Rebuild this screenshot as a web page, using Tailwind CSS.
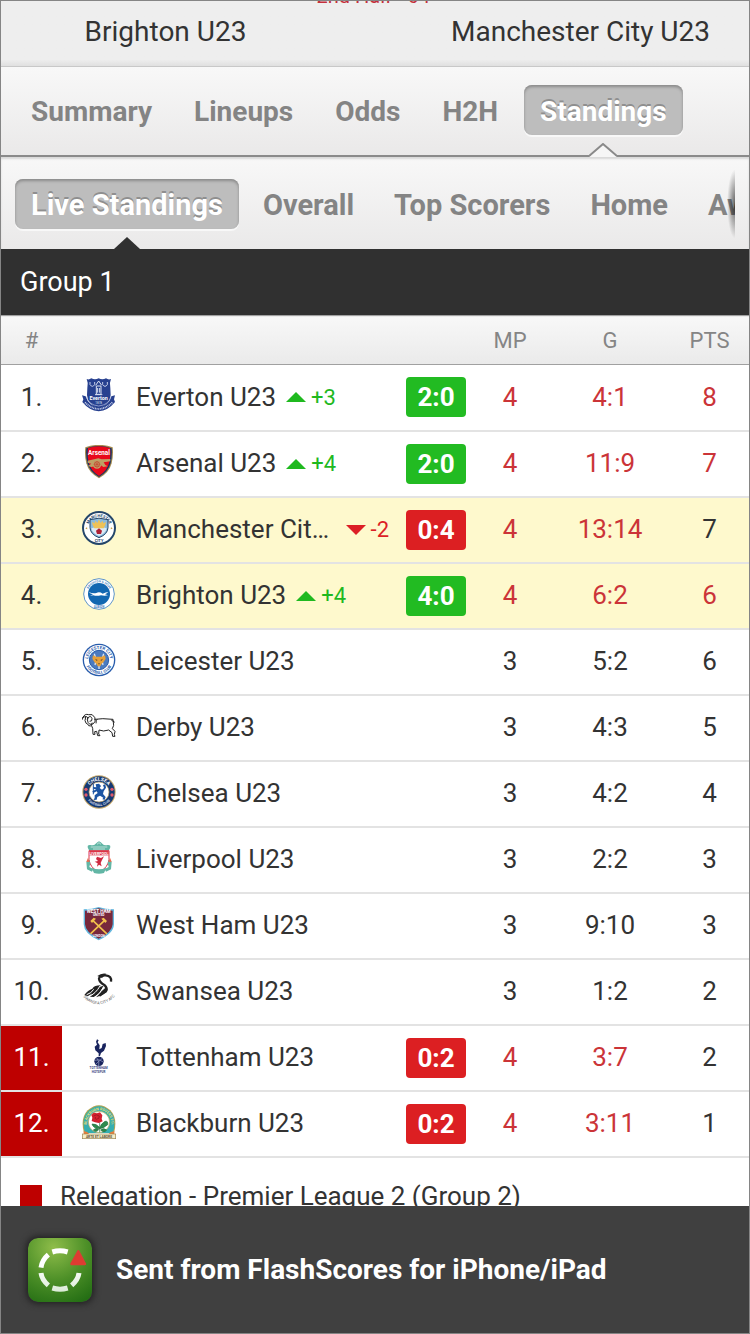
<!DOCTYPE html>
<html lang="en">
<head>
  <meta charset="UTF-8">
  <meta name="viewport" content="width=device-width, initial-scale=1">
  <title>Brighton U23 - Manchester City U23 | Standings</title>
  <script src="https://cdn.jsdelivr.net/npm/@tailwindcss/browser@4"></script>
</head>
<body class="flex flex-col h-screen overflow-hidden border border-[#858585] bg-white font-['Roboto',sans-serif] text-[#333]">

  <!-- Match header -->
  <header class="flex flex-col justify-end shrink-0 h-[66px] overflow-hidden border-b border-[#c8c8c8] bg-linear-to-b from-[#eeeeee] from-90% to-[#e0e0e0] text-center">
    <p class="mb-1.5 text-xl leading-6 text-[#c4303c]">2nd Half - 64'</p>
    <div class="flex pb-4 pr-1 text-[28px] leading-9">
      <h1 class="flex-1">Brighton U23</h1>
      <span class="w-[86px]"></span>
      <h1 class="flex-1">Manchester City U23</h1>
    </div>
  </header>

  <!-- Main tabs -->
  <nav class="flex gap-2.5 shrink-0 h-[90px] pl-3.5 border-b-2 border-[#8a8a8a] bg-linear-to-b from-[#f8f8f8] to-[#eae9e9] text-[28px] font-bold text-[#848484] [text-shadow:0_2px_0_#fff]">
    <button class="h-[50px] mt-[18px] pt-1 px-4">Summary</button>
    <button class="h-[50px] mt-[18px] pt-1 px-4">Lineups</button>
    <button class="h-[50px] mt-[18px] pt-1 px-4">Odds</button>
    <button class="h-[50px] mt-[18px] pt-1 px-4">H2H</button>
    <div class="relative pt-[18px]">
      <button class="h-[50px] pt-1 px-4 rounded-lg bg-[#bdbdbd] text-white shadow-[inset_0_2px_3px_#8a8a8a,0_2px_0_#f8f8f8] [text-shadow:0_-2px_0_#8f8f8f]">Standings</button>
      <svg class="absolute -bottom-0.5 left-1/2 -translate-x-1/2 w-7 h-3.5" viewBox="0 0 28 14">
        <path d="M0 14 L14 1 L28 14Z" fill="#f6f6f6"/>
        <path d="M0 13 L14 1 L28 13" fill="none" stroke="#8a8a8a" stroke-width="2"/>
      </svg>
    </div>
  </nav>

  <!-- Sub tabs -->
  <div class="shrink-0 h-[92px] pr-3.5 bg-linear-to-b from-[#f8f8f8] to-[#eae9e9] shadow-[inset_0_2px_2px_#d8d8d8]">
    <nav class="relative flex gap-2 h-full pl-3.5 overflow-hidden whitespace-nowrap text-[29px] font-bold text-[#848484] [text-shadow:0_2px_0_#fff]">
      <div class="relative pt-[22px]">
        <button class="h-[50px] pt-1 px-4 rounded-lg bg-[#bdbdbd] text-white shadow-[inset_0_2px_3px_#8a8a8a,0_2px_0_#f8f8f8] [text-shadow:0_-2px_0_#8f8f8f]">Live Standings</button>
        <svg class="absolute bottom-0 left-1/2 -translate-x-1/2 w-[26px] h-3" viewBox="0 0 26 12">
          <path d="M0 12 L13 0 L26 12Z" fill="#303030"/>
        </svg>
      </div>
      <button class="h-[50px] mt-[22px] pt-1 px-4">Overall</button>
      <button class="h-[50px] mt-[22px] pt-1 px-4">Top Scorers</button>
      <button class="h-[50px] mt-[22px] pt-1 px-4">Home</button>
      <button class="h-[50px] mt-[22px] pt-1 px-4">Away</button>
      <span class="absolute right-0 top-3 w-2 h-[70px] bg-[radial-gradient(ellipse_at_right,rgba(0,0,0,.6),transparent_70%)]"></span>
    </nav>
  </div>

  <!-- Standings -->
  <main class="flex-1 min-h-0 overflow-hidden">
    <h2 class="h-[66px] pl-[19px] bg-[#303030] text-[27px] leading-[66px] text-white">Group 1</h2>
    <table class="w-full table-fixed text-[26px] text-center">
      <colgroup>
        <col class="w-[61px]">
        <col class="w-[74px]">
        <col>
        <col class="w-16">
        <col class="w-20">
        <col class="w-[120px]">
        <col class="w-[79px]">
      </colgroup>
      <thead class="border-y border-[#a0a0a0] bg-linear-to-b from-[#f8f8f8] to-[#eaeaea] text-[22px] text-[#858585]">
        <tr class="h-[49px]">
          <th class="font-normal">#</th>
          <th></th>
          <th></th>
          <th></th>
          <th class="font-normal">MP</th>
          <th class="font-normal">G</th>
          <th class="font-normal">PTS</th>
        </tr>
      </thead>
      <tbody id="rows"></tbody>
    </table>
    <p class="flex items-center gap-[18px] pt-[22px] pl-[19px] text-[26px] leading-8 whitespace-nowrap">
      <span class="size-[22px] bg-[#be0000]"></span>Relegation - Premier League 2 (Group 2)
    </p>
  </main>

  <!-- Banner -->
  <footer class="flex items-center gap-6 shrink-0 h-[127px] pl-[27px] bg-[#404040] text-[28px] font-bold text-white">
    <svg class="size-16 rounded-[10px] shadow-[0_0_6px_2px_#222]" viewBox="0 0 192 192">
      <defs>
        <radialGradient id="app" cx=".4" cy=".15" r=".95">
          <stop offset="0" stop-color="#8fbd4a"/>
          <stop offset=".55" stop-color="#4c8f27"/>
          <stop offset="1" stop-color="#246e14"/>
        </radialGradient>
        <linearGradient id="ring" x1="0" y1="30" x2="0" y2="165" gradientUnits="userSpaceOnUse">
          <stop offset=".4" stop-color="#fff"/>
          <stop offset="1" stop-color="#d9ead5"/>
        </linearGradient>
      </defs>
      <rect width="192" height="192" rx="30" fill="url(#app)"/>
      <g fill="none" stroke="url(#ring)" stroke-width="15">
        <path d="M73 42 Q96 35 119 42"/>
        <path d="M61 50 Q42 66 39 89"/>
        <path d="M39 105 Q42 126 61 142"/>
        <path d="M73 150 Q96 157 119 150"/>
        <path d="M131 142 Q150 126 153 105"/>
      </g>
      <path d="M151 40 L171 78 H130Z" fill="#dd3c32" stroke="#dd3c32" stroke-width="7" stroke-linejoin="round"/>
    </svg>
    Sent from FlashScores for iPhone/iPad
  </footer>

  <!-- Club crests -->
  <svg class="hidden">
    <symbol id="everton" viewBox="0 0 102 102">
      <path d="M14 3 Q21 6 28 1 Q39 7 50 1 Q61 7 72 1 Q79 6 87 3 Q81 16 85 30 L86 52 Q84 80 50 92 Q17 80 15 52 L16 30 Q20 16 14 3Z" fill="#27408f"/>
      <path d="M0 52 L11 55 Q20 84 50 88 Q80 84 88 55 L99 52 L96 64 L99 72 Q78 98 50 100 Q22 98 1 72 L4 64Z" fill="#27408f"/>
      <path d="M13 56 Q20 81 50 84 Q80 81 87 56" fill="none" stroke="#b8c3e6" stroke-width="2"/>
      <path d="M9 73 Q28 92 50 93 Q72 92 91 73" fill="none" stroke="#c5cee9" stroke-width="5" stroke-dasharray="3 2"/>
      <path d="M24 12 V20 Q31 30 38 20 V12 M62 12 V20 Q69 30 76 20 V12" fill="none" stroke="#c5cee9" stroke-width="3"/>
      <path d="M41 22 L50 9 L59 22 M43 24 H57 V49 H43Z M47 30 V44 M53 30 V44 M39 50 H61" fill="none" stroke="#dbe1f2" stroke-width="3"/>
      <text x="50" y="66" text-anchor="middle" font-size="16" font-weight="700" fill="#fff">Everton</text>
      <text x="50" y="78" text-anchor="middle" font-size="9" fill="#dbe1f2">1878</text>
    </symbol>
    <symbol id="arsenal" viewBox="0 0 102 102">
      <path d="M10 7 Q50 -8 92 7 Q95 30 89 55 Q82 83 51 100 Q20 83 13 55 Q7 30 10 7Z" fill="#a58a4e"/>
      <path d="M13 10 Q50 -4 89 10 Q91 32 86 54 Q79 80 51 96 Q23 80 16 54 Q11 32 13 10Z" fill="#163365"/>
      <path d="M18 9 Q50 -2 84 9 Q87 32 82 52 Q76 78 51 93 Q26 78 20 52 Q15 32 18 9Z" fill="#e8091b"/>
      <text x="51" y="30" text-anchor="middle" font-size="19" font-weight="700" fill="#fff">Arsenal</text>
      <path d="M17 47 L49 40 L59 43 L85 42 V49 L65 52 L70 60 L77 64 L64 66 L56 60 L28 66 L18 63 L28 56 L17 53Z" fill="#bea065"/>
      <circle cx="45" cy="58" r="13" fill="#bea065"/>
      <circle cx="45" cy="58" r="8" fill="none" stroke="#c73a2a" stroke-width="2"/>
      <path d="M45 48 V68 M35 58 H55 M38 51 L52 65 M52 51 L38 65" stroke="#c73a2a" stroke-width="1.5"/>
    </symbol>
    <symbol id="mancity" viewBox="0 0 102 102">
      <circle cx="51" cy="51" r="51" fill="#24466a"/>
      <circle cx="51" cy="51" r="45" fill="#fff"/>
      <path id="mc-top" d="M18 51 A33 33 0 0 1 84 51" fill="none"/>
      <text font-size="12" font-weight="700" fill="#24466a" text-anchor="middle"><textPath href="#mc-top" startOffset="50%">MANCHESTER</textPath></text>
      <text x="51" y="92" text-anchor="middle" font-size="12" font-weight="700" fill="#24466a">CITY</text>
      <path d="M24 26 Q51 17 78 26 V50 Q77 70 51 80 Q25 70 24 50Z" fill="#8dbbdd" stroke="#24466a" stroke-width="3"/>
      <path d="M28 52 Q51 42 74 52 Q71 67 51 75 Q31 67 28 52Z" fill="#dceaf5"/>
      <path d="M32 42 L30 33 L38 37 L40 29 L46 36 L51 25 L56 36 L62 29 L64 37 L72 33 L70 42 L65 52 H37Z" fill="#eec258"/>
      <path d="M51 52 L60 59 L57 69 H45 L42 59Z" fill="#ad1f35"/>
      <path d="M10 53 L15 48 L16 55Z M92 53 L87 48 L86 55Z" fill="#c9a24b"/>
    </symbol>
    <symbol id="brighton" viewBox="0 0 102 102">
      <circle cx="51" cy="51" r="46" fill="#fff" stroke="#3f80c0" stroke-width="2.5"/>
      <circle cx="51" cy="51" r="33" fill="#1267b1"/>
      <path id="br-top" d="M16 51 A35 35 0 0 1 86 51" fill="none"/>
      <text font-size="9" font-weight="700" fill="#3f80c0" text-anchor="middle"><textPath href="#br-top" startOffset="50%">BRIGHTON &amp; HOVE</textPath></text>
      <text x="51" y="93" text-anchor="middle" font-size="9" font-weight="700" fill="#3f80c0">ALBION</text>
      <path d="M20 45 Q31 50 43 48 Q52 43 62 50 Q72 46 79 45 Q75 49 69 52 L78 55 Q68 57 57 55 Q44 58 34 55 L24 56 L33 52 Q25 51 20 45Z" fill="#fff"/>
    </symbol>
    <symbol id="leicester" viewBox="0 0 102 102">
      <circle cx="51" cy="51" r="49" fill="#275bab"/>
      <circle cx="51" cy="51" r="45" fill="#fff"/>
      <circle cx="51" cy="51" r="29" fill="#4b7bc0" stroke="#275bab" stroke-width="3"/>
      <path id="le-top" d="M18 51 A33 33 0 0 1 84 51" fill="none"/>
      <path id="le-bot" d="M9 51 A42 42 0 0 0 93 51" fill="none"/>
      <text font-size="13" font-weight="700" fill="#275bab" text-anchor="middle"><textPath href="#le-top" startOffset="50%">LEICESTER CITY</textPath></text>
      <text font-size="12" font-weight="700" fill="#275bab" text-anchor="middle"><textPath href="#le-bot" startOffset="50%">FOOTBALL CLUB</textPath></text>
      <path d="M37 32 Q44 50 39 66 M65 32 Q58 50 63 66 M51 66 V78" stroke="#dce7f5" stroke-width="4" fill="none"/>
      <path d="M33 37 L43 41 H59 L69 37 L71 47 L65 57 L59 62 L55 70 H47 L43 62 L37 57 L31 47Z" fill="#e6a13b"/>
      <path d="M39 47 L47 51 L44 54Z M63 47 L55 51 L58 54Z M48 61 H54 L51 65Z" fill="#6c4a28"/>
    </symbol>
    <symbol id="derby" viewBox="0 0 102 102">
      <g fill="none" stroke="#222" stroke-width="3" stroke-linecap="round" stroke-linejoin="round">
        <path d="M38 31 Q60 27 93 31 L95 49 L91 59 L99 67 L97 77 L99 82 H92 L90 71 L80 63 Q64 69 51 63 L50 75 L54 80 H47 L44 67 L38 68 L39 76 H33 L32 58 Q26 50 30 42"/>
        <path d="M3 25 Q8 13 20 17 Q32 13 38 25 Q43 39 32 45 Q22 49 18 40 Q13 30 20 24 Q28 20 30 29 Q31 38 24 37"/>
        <path d="M3 25 Q7 22 11 24 L9 35 Q12 46 17 45 L20 50 Q26 53 29 48 M10 23 Q18 20 17 31 M3 25 L1 31 M45 31 Q41 34 42 42 M89 34 L97 39"/>
      </g>
    </symbol>
    <symbol id="chelsea" viewBox="0 0 102 102">
      <circle cx="51" cy="51" r="50" fill="#c7a86a"/>
      <circle cx="51" cy="51" r="47" fill="#153a73"/>
      <circle cx="51" cy="51" r="30" fill="#fff" stroke="#c7a86a" stroke-width="2"/>
      <path id="ch-top" d="M17 51 A34 34 0 0 1 85 51" fill="none"/>
      <path id="ch-bot" d="M9 51 A42 42 0 0 0 93 51" fill="none"/>
      <text font-size="15" font-weight="700" fill="#fff" text-anchor="middle"><textPath href="#ch-top" startOffset="50%">CHELSEA</textPath></text>
      <text font-size="10" font-weight="700" fill="#d7dfec" text-anchor="middle"><textPath href="#ch-bot" startOffset="50%">FOOTBALL CLUB</textPath></text>
      <g fill="#e05a6d"><circle cx="12" cy="43" r="5"/><circle cx="90" cy="43" r="5"/><circle cx="12" cy="60" r="5"/><circle cx="90" cy="60" r="5"/></g>
      <path d="M41 28 L51 26 L57 33 L53 39 L60 44 L66 39 L63 30 L70 28 L72 38 L65 49 L63 57 L71 66 L68 74 L61 73 L64 68 L54 62 L46 66 L44 74 L35 75 L38 68 L38 61 L47 54 L44 49 L34 54 L31 49 L43 43 L35 42 L33 36 L43 37Z" fill="#1d55a3"/>
      <path d="M34 27 V58" stroke="#1d55a3" stroke-width="3"/>
    </symbol>
    <symbol id="liverpool" viewBox="0 0 102 102">
      <path d="M18 22 Q14 11 25 12 Q35 15 41 8 Q46 3 51 1 Q57 3 61 8 Q67 15 77 12 Q88 11 84 22 L80 29 H22Z" fill="#62b6a5"/>
      <path d="M26 18 H76 M33 24 H69 M45 10 L51 5 L57 10" stroke="#e9f6f3" stroke-width="2" fill="none"/>
      <path d="M21 29 H81 V55 Q79 79 51 94 Q23 79 21 55Z" fill="#fff" stroke="#dc3346" stroke-width="3"/>
      <path d="M22 30 H80 V43 H22Z" fill="#dc3346"/>
      <text x="51" y="41" text-anchor="middle" font-size="11" font-weight="700" fill="#fff">LIVERPOOL</text>
      <path d="M45 47 L57 51 L66 46 L60 57 L56 66 L59 76 L51 71 L45 77 L47 67 L38 62 L48 60 L42 54 Z" fill="#cf2a40"/>
      <path d="M13 62 L20 55 L25 66 L22 78 L34 84 L30 92 L15 85Z M89 62 L82 55 L77 66 L80 78 L68 84 L72 92 L87 85Z" fill="#62b6a5"/>
      <path d="M13 62 L18 50 L22 63Z M89 62 L84 50 L80 63Z" fill="#ee6a4b"/>
      <path d="M29 81 Q51 89 73 81 L66 96 Q51 100 36 96Z" fill="#62b6a5"/>
    </symbol>
    <symbol id="westham" viewBox="0 0 102 102">
      <path d="M5 7 Q31 7 50 0 Q70 7 96 7 V52 Q95 80 50 100 Q6 80 5 52Z" fill="#63b7df"/>
      <path d="M9 11 Q32 10 50 4 Q69 10 92 11 V52 Q90 77 50 95 Q11 77 9 52Z" fill="#78283c"/>
      <text x="50" y="19" text-anchor="middle" font-size="14" font-weight="700" fill="#fff">WEST HAM</text>
      <text x="50" y="28" text-anchor="middle" font-size="10" font-weight="700" fill="#fff">UNITED</text>
      <path d="M33 41 L73 79 M67 41 L27 79" stroke="#f2c14c" stroke-width="5" stroke-linecap="round"/>
      <path d="M25 42 L35 32 L42 35 L30 48Z M75 42 L65 32 L58 35 L70 48Z" fill="#f2c14c"/>
      <text x="50" y="89" text-anchor="middle" font-size="9" font-weight="700" fill="#fff">LONDON</text>
    </symbol>
    <symbol id="swansea" viewBox="0 0 102 102">
      <path d="M87 26 Q90 9 71 7 Q53 6 51 17 Q52 28 67 36 Q78 45 70 55 Q61 62 52 68" fill="none" stroke="#222" stroke-width="7"/>
      <path d="M46 9 Q58 -1 73 2 L60 15Z" fill="#222"/>
      <path d="M7 66 Q18 51 31 47 Q37 37 56 37 Q40 58 17 70Z M24 71 Q33 54 49 43 L65 38 Q54 63 35 72Z M42 73 Q54 57 73 42 Q81 49 74 58 Q61 69 42 73Z" fill="#222"/>
      <path d="M14 65 Q28 61 35 49 M20 71 Q41 62 54 39 M38 73 Q54 64 65 41" stroke="#fff" stroke-width="3" fill="none"/>
      <path id="sw-bot" d="M1 68 Q18 92 50 94 Q84 91 101 65" fill="none"/>
      <text font-size="12" fill="#666" text-anchor="middle"><textPath href="#sw-bot" startOffset="50%">SWANSEA CITY AFC</textPath></text>
    </symbol>
    <symbol id="tottenham" viewBox="0 0 102 102">
      <g fill="#19245e">
        <path d="M45 1 L50 4 L47 10 L53 19 L52 31 L59 27 L62 15 L71 12 L72 21 L66 35 L57 42 L54 51 H50 V43 L40 34 L38 23 L45 17 L42 8Z"/>
        <circle cx="51" cy="67" r="14"/>
      </g>
      <path d="M38 64 Q51 58 64 69 M44 56 Q54 68 50 81 M62 57 Q52 65 41 76" stroke="#9aa2c9" stroke-width="2" fill="none"/>
      <text x="50" y="91" text-anchor="middle" font-size="9" font-weight="700" fill="#3a4580">TOTTENHAM</text>
      <text x="50" y="101" text-anchor="middle" font-size="9" font-weight="700" fill="#3a4580">HOTSPUR</text>
    </symbol>
    <symbol id="blackburn" viewBox="0 0 102 102">
      <path d="M6 84 Q-6 40 17 16 Q51 -15 85 16 Q108 40 96 84Z" fill="#b4a24d"/>
      <path d="M9 84 Q-3 40 19 18 Q51 -10 83 18 Q105 40 93 84Z" fill="#35aeb0"/>
      <path id="bb-arc" d="M15 84 Q9 44 25 27 Q51 4 77 27 Q93 44 87 84" fill="none"/>
      <text font-size="11" font-weight="700" fill="#f0dc6b" text-anchor="middle"><textPath href="#bb-arc" startOffset="50%">BLACKBURN ROVERS F.C.</textPath></text>
      <circle cx="51" cy="51" r="32" fill="#fff" stroke="#b4a24d" stroke-width="2"/>
      <path d="M53 48 V82 M53 68 Q43 55 30 57 Q34 71 53 71 Q65 70 77 59 Q79 47 69 49 Q57 56 53 68 M50 74 Q41 84 34 75 Q42 66 50 74 M56 75 Q66 85 74 75 Q65 67 56 75" fill="#2d8a4e" stroke="#226e3c" stroke-width="2"/>
      <path d="M28 30 L35 23 L45 25 L54 22 L61 31 L59 42 L62 49 L50 54 L39 52 L29 48 L31 38Z" fill="#d3202f"/>
      <path d="M35 33 Q43 26 52 33 Q53 42 43 43 Q36 40 41 36" fill="none" stroke="#8f1320" stroke-width="2"/>
      <path d="M5 79 Q15 78 22 87 H80 Q87 78 97 79 V88 H5Z" fill="#e77e3c"/>
      <rect x="1" y="87" width="100" height="14" fill="#f6edc8" stroke="#9b8550" stroke-width="2"/>
      <text x="51" y="98" text-anchor="middle" font-size="10" font-weight="700" fill="#5e5035">ARTE ET LABORE</text>
    </symbol>
  </svg>

  <script>
    // live is the score of a match in progress, down marks the relegation places
    const teams = [
      { id: 'everton', name: 'Everton U23', move: 3, live: '2:0', win: true, mp: 4, g: '4:1', pts: 8, redPts: true },
      { id: 'arsenal', name: 'Arsenal U23', move: 4, live: '2:0', win: true, mp: 4, g: '11:9', pts: 7, redPts: true },
      { id: 'mancity', name: 'Manchester City U23', move: -2, live: '0:4', mp: 4, g: '13:14', pts: 7, active: true },
      { id: 'brighton', name: 'Brighton U23', move: 4, live: '4:0', win: true, mp: 4, g: '6:2', pts: 6, redPts: true, active: true },
      { id: 'leicester', name: 'Leicester U23', mp: 3, g: '5:2', pts: 6 },
      { id: 'derby', name: 'Derby U23', mp: 3, g: '4:3', pts: 5 },
      { id: 'chelsea', name: 'Chelsea U23', mp: 3, g: '4:2', pts: 4 },
      { id: 'liverpool', name: 'Liverpool U23', mp: 3, g: '2:2', pts: 3 },
      { id: 'westham', name: 'West Ham U23', mp: 3, g: '9:10', pts: 3 },
      { id: 'swansea', name: 'Swansea U23', mp: 3, g: '1:2', pts: 2 },
      { id: 'tottenham', name: 'Tottenham U23', live: '0:2', mp: 4, g: '3:7', pts: 2, down: true },
      { id: 'blackburn', name: 'Blackburn U23', live: '0:2', mp: 4, g: '3:11', pts: 1, down: true },
    ];

    function moveTag(n) {
      if (!n) return '';
      const up = n > 0;
      return `
        <span class="flex items-center gap-[5px] shrink-0 text-[22px] ${up ? 'text-[#1fb91f]' : 'text-[#dc1f26]'}">
          <svg class="w-5 h-2.5" viewBox="0 0 20 10" fill="currentColor"><path d="${up ? 'M0 10 L10 0 L20 10Z' : 'M0 0 L10 10 L20 0Z'}"/></svg>
          ${up ? '+' + n : n}
        </span>`;
    }

    document.getElementById('rows').innerHTML = teams.map((t, i) => `
      <tr class="h-[66px] border-b-2 border-[#e3e3e3] ${t.active ? 'bg-[#fef9cd]' : 'bg-white'}">
        <td class="${t.down ? 'bg-[#be0000] text-white' : ''}">${i + 1}.</td>
        <td><svg class="size-[34px] mx-auto mb-1"><use href="#${t.id}"/></svg></td>
        <td class="pr-[17px]">
          <div class="flex items-center gap-2.5">
            <span class="truncate">${t.name}</span>${moveTag(t.move)}
          </div>
        </td>
        <td>${t.live ? `<span class="block w-[60px] h-10 rounded-sm leading-10 font-bold text-white ${t.win ? 'bg-[#22bb22]' : 'bg-[#dc1f22]'}">${t.live}</span>` : ''}</td>
        <td class="${t.live ? 'text-[#cb3438]' : ''}">${t.mp}</td>
        <td class="${t.live ? 'text-[#cb3438]' : ''}">${t.g}</td>
        <td class="${t.redPts ? 'text-[#cb3438]' : ''}">${t.pts}</td>
      </tr>`).join('');
  </script>
</body>
</html>
